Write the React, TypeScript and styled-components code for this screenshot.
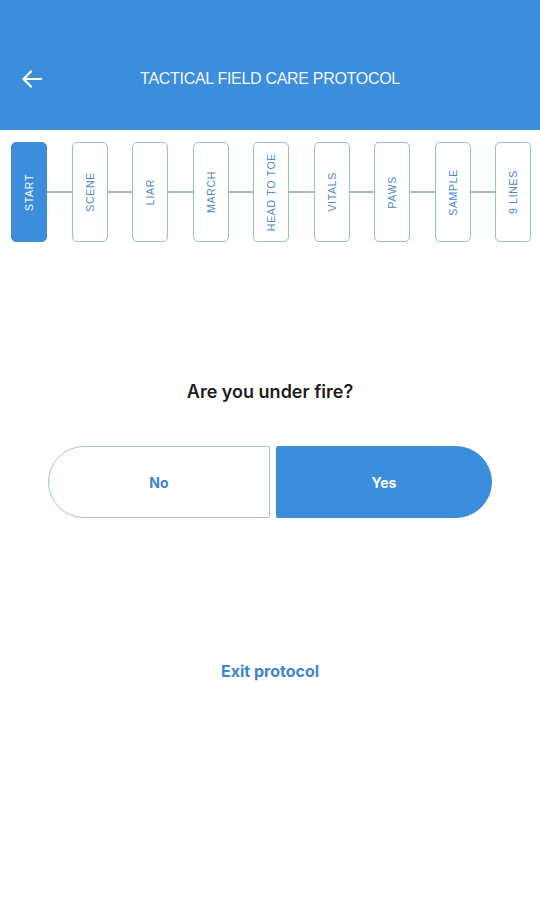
import React, { useState } from 'react';
import styled, { createGlobalStyle } from 'styled-components';

const GlobalStyle = createGlobalStyle`
  html, body {
    margin: 0;
    padding: 0;
    background: #ffffff;
  }
  body {
    font-family: "Liberation Sans", Roboto, sans-serif;
  }
`;

const Screen = styled.div`
  width: 540px;
  height: 900px;
  display: flex;
  flex-direction: column;
  background: #fff;
`;

const Header = styled.header`
  height: 130px;
  background: #3c8ddc;
  display: grid;
  grid-template-columns: 66px 1fr 66px;
  align-items: center;
  padding-top: 28px;
  box-sizing: border-box;
`;

const BackButton = styled.button`
  border: none;
  background: none;
  padding: 0 0 0 20px;
  display: flex;
  align-items: center;
  color: #fff;
  cursor: pointer;
`;

const Title = styled.h1`
  margin: 0;
  text-align: center;
  color: #f4f8fd;
  font-family: "Liberation Sans", Arial, sans-serif;
  font-size: 16px;
  font-weight: 400;
  letter-spacing: -0.3px;
`;

const Steps = styled.nav`
  display: flex;
  align-items: center;
  padding: 12px 9px 0 11px;
`;

const Step = styled.div<{ $active?: boolean }>`
  width: 36px;
  height: 100px;
  flex: none;
  box-sizing: border-box;
  border-radius: 5px;
  border: 1.5px solid ${(p) => (p.$active ? '#3c8ddc' : '#9dbad6')};
  background: ${(p) => (p.$active ? '#3c8ddc' : '#fff')};
  color: ${(p) => (p.$active ? '#fff' : '#4f88c4')};
  display: flex;
  align-items: center;
  justify-content: center;
`;

const StepLabel = styled.span`
  writing-mode: vertical-rl;
  transform: rotate(180deg);
  font-family: "Liberation Sans", Arial, sans-serif;
  font-size: 10.5px;
  white-space: nowrap;
  letter-spacing: 0.7px;
`;

const Connector = styled.div`
  flex: 1;
  height: 1.5px;
  background: #9dbad6;
`;

const Body = styled.main`
  display: flex;
  flex-direction: column;
  align-items: center;
  padding-top: 139px;
`;

const Question = styled.h2`
  margin: 0;
  font-family: Inter, Roboto, sans-serif;
  font-size: 18px;
  font-weight: 600;
  color: #1c1c1c;
`;

const Choices = styled.div`
  display: flex;
  gap: 6px;
  margin-top: 44px;
`;

const Choice = styled.button<{ $side: 'left' | 'right'; $selected?: boolean }>`
  height: 72px;
  width: ${(p) => (p.$side === 'left' ? '222px' : '216px')};
  box-sizing: border-box;
  border: 1.5px solid ${(p) => (p.$selected ? '#3c8ddc' : '#a9c3dd')};
  background: ${(p) => (p.$selected ? '#3c8ddc' : '#fff')};
  color: ${(p) => (p.$selected ? '#fff' : '#3c84d0')};
  border-radius: ${(p) => (p.$side === 'left' ? '36px 2px 2px 36px' : '2px 36px 36px 2px')};
  font-family: Inter, Roboto, sans-serif;
  font-size: 14px;
  font-weight: 700;
  cursor: pointer;
`;

const ExitLink = styled.button`
  margin-top: 142px;
  border: none;
  background: none;
  color: #3c84d0;
  font-family: Inter, Roboto, sans-serif;
  font-size: 16px;
  font-weight: 700;
  cursor: pointer;
`;

const STEPS = ['START', 'SCENE', 'LIAR', 'MARCH', 'HEAD TO TOE', 'VITALS', 'PAWS', 'SAMPLE', '9 LINES'];

export default function App() {
  const [answer, setAnswer] = useState<'no' | 'yes'>('yes');

  return (
    <Screen>
      <GlobalStyle />
      <Header>
        <BackButton aria-label="Back">
          <svg width="24" height="24" viewBox="0 0 24 24" fill="none" stroke="currentColor" strokeWidth="2.2" strokeLinecap="round" strokeLinejoin="round">
            <path d="M21 12H3.5M11 4.5L3.5 12l7.5 7.5" />
          </svg>
        </BackButton>
        <Title>TACTICAL FIELD CARE PROTOCOL</Title>
        <span />
      </Header>

      <Steps>
        {STEPS.map((s, i) => (
          <React.Fragment key={s}>
            {i > 0 && <Connector />}
            <Step $active={i === 0}>
              <StepLabel>{s}</StepLabel>
            </Step>
          </React.Fragment>
        ))}
      </Steps>

      <Body>
        <Question>Are you under fire?</Question>
        <Choices>
          <Choice $side="left" $selected={answer === 'no'} onClick={() => setAnswer('no')}>No</Choice>
          <Choice $side="right" $selected={answer === 'yes'} onClick={() => setAnswer('yes')}>Yes</Choice>
        </Choices>
        <ExitLink>Exit protocol</ExitLink>
      </Body>
    </Screen>
  );
}
